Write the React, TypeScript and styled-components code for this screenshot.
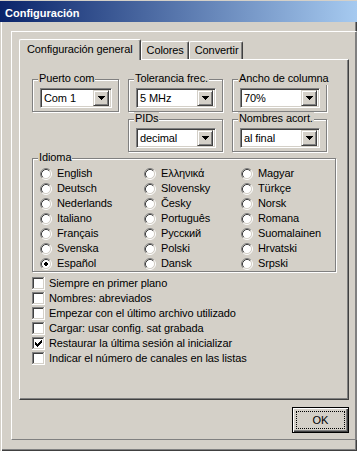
import React from "react";
import styled, { createGlobalStyle } from "styled-components";

const GlobalStyle = createGlobalStyle`
  html, body {
    margin: 0;
    padding: 0;
    background: #d4d0c8;
  }
`;

const Window = styled.div`
  width: 357px;
  height: 451px;
  display: flex;
  flex-direction: column;
  background: #d4d0c8;
  font-family: "Liberation Sans", Arial, sans-serif;
  font-size: 11px;
  letter-spacing: -0.1px;
  color: #000;
  overflow: hidden;
`;

const TitleBar = styled.div`
  flex: none;
  height: 21px;
  margin-top: 1px;
  box-sizing: border-box;
  padding: 2px 0 0 5px;
  display: flex;
  align-items: center;
  background: linear-gradient(to right, #0a246a, #a6caf0);
  color: #fff;
  font-weight: bold;
  font-size: 11px;
  letter-spacing: 0;
`;

const Body = styled.div`
  flex: 1;
  display: flex;
  padding: 9px 9px 11px 11px;
  box-shadow: inset 1px 0 #d4d0c8, inset 2px 0 #fff, inset -1px -1px #404040,
    inset -2px -2px #808080;
`;

const Frame = styled.div`
  flex: 1;
  display: flex;
  flex-direction: column;
  border: 1px solid;
  border-color: #fff #808080 #808080 #fff;
  padding: 7px 7px 6px 7px;
`;

const TabStrip = styled.div`
  flex: none;
  height: 20px;
  display: flex;
  align-items: flex-end;
  position: relative;
  z-index: 1;
`;

const Tab = styled.div<{ $active?: boolean }>`
  box-sizing: border-box;
  height: ${(p) => (p.$active ? 21 : 18)}px;
  margin-bottom: ${(p) => (p.$active ? -1 : 0)}px;
  padding: ${(p) => (p.$active ? "3px 7px 0 7px" : "2px 4px 0 5px")};
  display: flex;
  align-items: flex-start;
  line-height: 13px;
  white-space: nowrap;
  background: #d4d0c8;
  border-top: 1px solid #fff;
  border-left: 1px solid #fff;
  border-right: 1px solid #404040;
  border-radius: 2px 2px 0 0;
  box-shadow: inset -1px 0 #808080;
`;

const Panel = styled.div`
  flex: none;
  height: 341px;
  box-sizing: border-box;
  border: 1px solid;
  border-color: #fff #404040 #404040 #fff;
  box-shadow: inset -1px -1px #808080;
  padding: 19px 11px 0 12px;
  display: flex;
  flex-direction: column;
`;

const TopGrid = styled.div`
  display: grid;
  grid-template-columns: 88px 96px 96px;
  grid-template-rows: 34px 34px;
  column-gap: 8px;
  row-gap: 6px;
`;

const GroupBox = styled.div<{ $pad?: string }>`
  position: relative;
  margin: 0 1px 1px 0;
  border: 1px solid #808080;
  box-shadow: inset 1px 1px #fff, 1px 1px #fff;
  padding: ${(p) => p.$pad ?? "8px 6px 0 7px"};
`;

const Legend = styled.span`
  position: absolute;
  top: -8px;
  left: 5px;
  padding: 0 1px;
  line-height: 13px;
  white-space: nowrap;
  background: #d4d0c8;
`;

const Combo = styled.div`
  height: 20px;
  box-sizing: border-box;
  padding: 2px;
  display: flex;
  align-items: center;
  background: #fff;
  border: 1px solid;
  border-color: #808080 #fff #fff #808080;
  box-shadow: inset 1px 1px #404040, inset -1px -1px #d4d0c8;
`;

const ComboText = styled.span`
  flex: 1;
  padding-left: 1px;
  line-height: 13px;
  white-space: nowrap;
`;

const DropButton = styled.div`
  width: 16px;
  height: 16px;
  box-sizing: border-box;
  display: flex;
  align-items: center;
  justify-content: center;
  background: #d4d0c8;
  border: 1px solid;
  border-color: #d4d0c8 #404040 #404040 #d4d0c8;
  box-shadow: inset 1px 1px #fff, inset -1px -1px #808080;
`;

const LangGroup = styled(GroupBox)`
  margin-top: 5px;
  width: 295px;
  display: grid;
  grid-template-columns: 104px 97px 1fr;
  grid-template-rows: repeat(7, 15px);
  grid-auto-flow: column;
`;

const OptionRow = styled.label<{ $gap?: number }>`
  display: flex;
  align-items: center;
  gap: ${(p) => p.$gap ?? 5}px;
  line-height: 13px;
  white-space: nowrap;
  height: 15px;
`;

const CheckList = styled.div`
  margin-top: 3px;
  display: flex;
  flex-direction: column;
`;

const Footer = styled.div`
  flex: none;
  margin-top: 7px;
  display: flex;
  justify-content: flex-end;
`;

const Button = styled.button`
  position: relative;
  width: 57px;
  height: 26px;
  box-sizing: border-box;
  padding: 0;
  border: 1px solid #000;
  background: #d4d0c8;
  box-shadow: inset 1px 1px #fff, inset -1px -1px #404040, inset -2px -2px #808080;
  font-family: "Liberation Sans", Arial, sans-serif;
  font-size: 11px;
  color: #000;

  &::after {
    content: "";
    position: absolute;
    inset: 3px;
    border: 1px dotted #000;
  }
`;

const Arrow = () => (
  <svg width="7" height="4" viewBox="0 0 7 4" shapeRendering="crispEdges">
    <path d="M0 0h7v1H6v1H5v1H4v1H3V3H2V2H1V1H0z" fill="#000" />
  </svg>
);

const Radio = ({ checked }: { checked?: boolean }) => (
  <svg width="12" height="12" viewBox="0 0 12 12" style={{ flex: "none" }}>
    <circle cx="6" cy="6" r="4.5" fill="#fff" />
    <path d="M2.11 9.89A5.5 5.5 0 0 1 9.89 2.11" fill="none" stroke="#808080" />
    <path d="M9.89 2.11A5.5 5.5 0 0 1 2.11 9.89" fill="none" stroke="#fff" />
    <path d="M2.82 9.18A4.5 4.5 0 0 1 9.18 2.82" fill="none" stroke="#404040" />
    <path d="M9.18 2.82A4.5 4.5 0 0 1 2.82 9.18" fill="none" stroke="#d4d0c8" />
    {checked && (
      <path
        d="M5 4h2v1h1v2H7v1H5V7H4V5h1z"
        fill="#000"
        shapeRendering="crispEdges"
      />
    )}
  </svg>
);

const Checkbox = ({ checked }: { checked?: boolean }) => (
  <svg
    width="13"
    height="13"
    viewBox="0 0 13 13"
    shapeRendering="crispEdges"
    style={{ flex: "none" }}
  >
    <rect width="13" height="13" fill="#fff" />
    <path d="M0 0h12v1H1v11H0z" fill="#808080" />
    <path d="M1 1h10v1H2v9H1z" fill="#404040" />
    <path d="M11 1h1v11H1v-1h10z" fill="#d4d0c8" />
    {checked && (
      <path
        d="M3 5h1v1h1v1h1V6h1V5h1V4h1V3h1v3H9v1H8v1H7v1H6v1H5V9H4V8H3z"
        fill="#000"
      />
    )}
  </svg>
);

const Select = ({ label, value }: { label: string; value: string }) => (
  <GroupBox>
    <Legend>{label}</Legend>
    <Combo>
      <ComboText>{value}</ComboText>
      <DropButton>
        <Arrow />
      </DropButton>
    </Combo>
  </GroupBox>
);

const languages = [
  "English",
  "Deutsch",
  "Nederlands",
  "Italiano",
  "Français",
  "Svenska",
  "Español",
  "Ελληνικά",
  "Slovensky",
  "Česky",
  "Português",
  "Русский",
  "Polski",
  "Dansk",
  "Magyar",
  "Türkçe",
  "Norsk",
  "Romana",
  "Suomalainen",
  "Hrvatski",
  "Srpski",
];

const options = [
  { text: "Siempre en primer plano", checked: false },
  { text: "Nombres: abreviados", checked: false },
  { text: "Empezar con el último archivo utilizado", checked: false },
  { text: "Cargar: usar config. sat grabada", checked: false },
  { text: "Restaurar la última sesión al inicializar", checked: true },
  { text: "Indicar el número de canales en las listas", checked: false },
];

export default function App() {
  return (
    <>
      <GlobalStyle />
      <Window>
        <TitleBar>Configuración</TitleBar>
        <Body>
          <Frame>
            <TabStrip>
              <Tab $active>Configuración general</Tab>
              <Tab>Colores</Tab>
              <Tab>Convertir</Tab>
            </TabStrip>
            <Panel>
              <TopGrid>
                <Select label="Puerto com" value="Com 1" />
                <Select label="Tolerancia frec." value="5 MHz" />
                <Select label="Ancho de columna" value="70%" />
                <div />
                <Select label="PIDs" value="decimal" />
                <Select label="Nombres acort." value="al final" />
              </TopGrid>
              <LangGroup $pad="7px 0 0 7px">
                <Legend>Idioma</Legend>
                {languages.map((lang) => (
                  <OptionRow key={lang}>
                    <Radio checked={lang === "Español"} />
                    {lang}
                  </OptionRow>
                ))}
              </LangGroup>
              <CheckList>
                {options.map((o) => (
                  <OptionRow key={o.text} $gap={4}>
                    <Checkbox checked={o.checked} />
                    {o.text}
                  </OptionRow>
                ))}
              </CheckList>
            </Panel>
            <Footer>
              <Button>OK</Button>
            </Footer>
          </Frame>
        </Body>
      </Window>
    </>
  );
}
